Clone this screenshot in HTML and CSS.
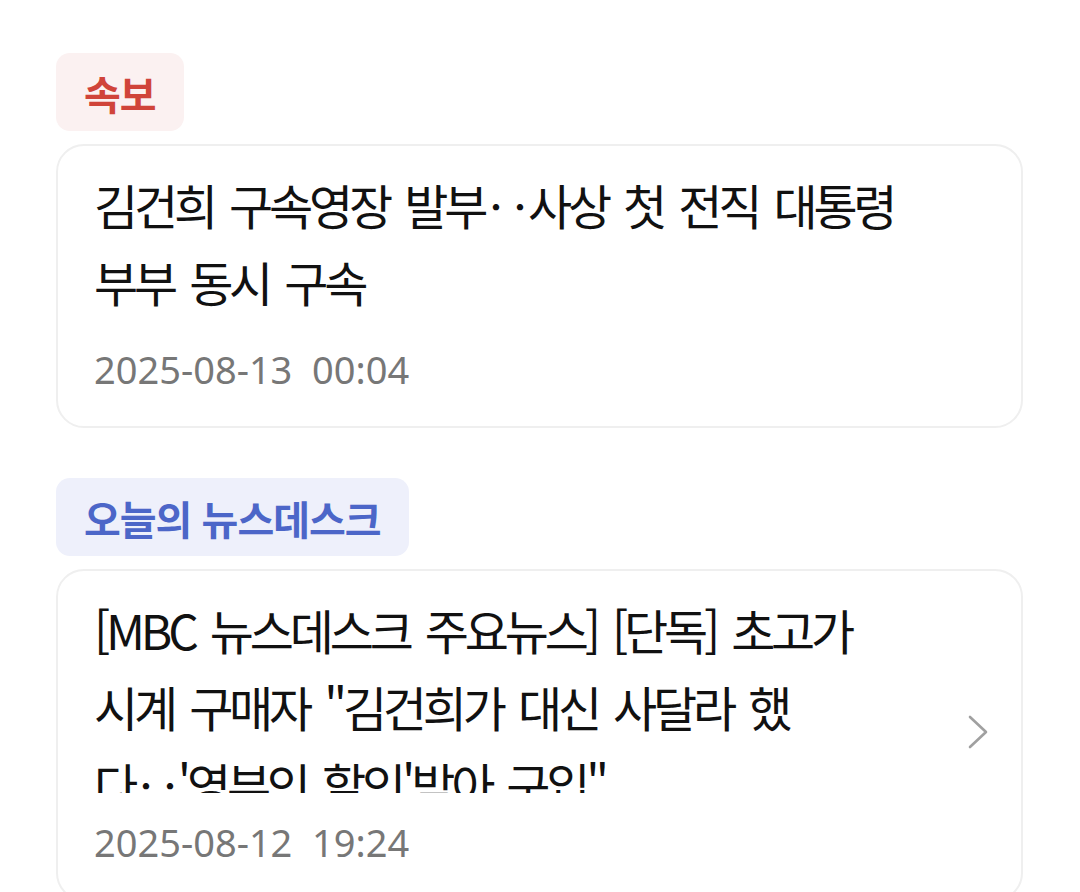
FILE: index.html
```html
<!DOCTYPE html>
<html lang="ko">
<head>
<meta charset="utf-8">
<title>뉴스</title>
<link rel="stylesheet" href="styles.css">
</head>
<body>
<main class="feed">
  <section class="group">
    <span class="tag tag-breaking">속보</span>
    <article class="card">
      <div class="card-body">
        <h2 class="headline">김건희 구속영장 발부‥사상 첫 전직 대통령<br>부부 동시 구속</h2>
        <p class="stamp">2025-08-13&nbsp;&nbsp;00:04</p>
      </div>
    </article>
  </section>
  <section class="group">
    <span class="tag tag-desk">오늘의 뉴스데스크</span>
    <article class="card card-link">
      <div class="card-body">
        <h2 class="headline headline-clamp">[MBC 뉴스데스크 주요뉴스] [단독] 초고가<br>시계 구매자 "김건희가 대신 사달라 했<br>다‥'영부인 할인'받아 구입"</h2>
        <p class="stamp">2025-08-12&nbsp;&nbsp;19:24</p>
      </div>
      <svg class="chevron" viewBox="0 0 20 34" width="20" height="34" aria-hidden="true">
        <polyline points="2,2 18,17 2,32" fill="none" stroke="currentColor" stroke-width="2.6" stroke-linecap="round" stroke-linejoin="round"/>
      </svg>
    </article>
  </section>
</main>
</body>
</html>
```
FILE: styles.css
```css
* {
  box-sizing: border-box;
}

html, body {
  margin: 0;
  background: #ffffff;
}

body {
  font-family: "Noto Sans CJK KR", "Noto Sans", sans-serif;
  color: #111111;
  overflow: hidden;
  height: 892px;
}

.feed {
  display: flex;
  flex-direction: column;
  gap: 50px;
  padding: 53px 57px 0 56px;
}

.group {
  display: flex;
  flex-direction: column;
  align-items: flex-start;
  gap: 13px;
}

.tag {
  display: inline-block;
  height: 78px;
  line-height: 80px;
  padding: 0 28px;
  border-radius: 14px;
  font-size: 40px;
  font-weight: 700;
  letter-spacing: -1px;
}

.tag-breaking {
  background: #fbf1f1;
  color: #d0443a;
}

.tag-desk {
  background: #eef0fb;
  color: #4c66c8;
}

.card {
  align-self: stretch;
  display: flex;
  align-items: center;
  border: 2px solid #efefef;
  border-radius: 28px;
  padding: 20px 36px 30px 36px;
}

.card-link {
  padding-right: 33px;
}

.card-body {
  flex: 1;
  min-width: 0;
}

.headline {
  margin: 0;
  font-size: 48px;
  font-weight: 400;
  line-height: 77px;
  letter-spacing: -4.2px;
  word-spacing: 6px;
  white-space: nowrap;
}

.headline-clamp {
  max-height: 202px;
  overflow: hidden;
}

.stamp {
  margin: 23px 0 0;
  font-family: "Noto Sans", "Open Sans", sans-serif;
  font-size: 38px;
  line-height: 53px;
  color: #777777;
}

.chevron {
  flex: none;
  display: block;
  color: #a0a0a0;
  margin: 3px 0 0 12px;
}
```
